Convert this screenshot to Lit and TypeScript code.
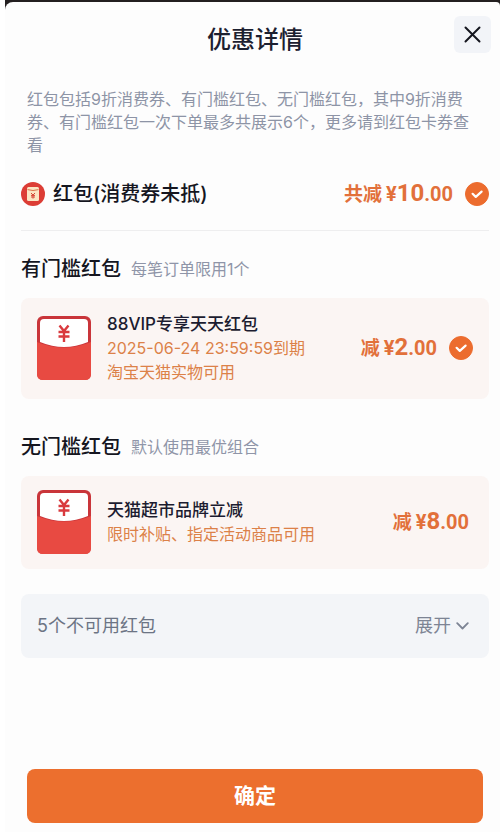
import { LitElement, html, css, nothing } from "lit";
import { customElement, property } from "lit/decorators.js";

const textFont = css`Inter, "Noto Sans CJK SC", sans-serif`;

@customElement("price-tag")
class PriceTag extends LitElement {
  @property() label = "减";
  @property() whole = "0";
  @property() cents = "00";
  @property({ type: Boolean }) selectable = false;

  static styles = css`
    :host { display: block; flex: none; color: #e2703a; font-family: ${textFont}; }
    .price { display: flex; align-items: center; gap: 12px; }
    .amount { font-size: 19px; line-height: 28px; font-weight: 700; white-space: nowrap; }
    .number { font-family: Roboto, sans-serif; font-weight: 700; font-size: 20px; margin-left: 4px; }
    .whole { font-size: 24px; }
    .box { display: grid; width: 24px; height: 24px; }
    .tick, .mark { grid-area: 1 / 1; width: 24px; height: 24px; margin: 0; }
    .tick { appearance: none; border: 1px solid #e2703a; border-radius: 50%; }
    .tick:checked { background: #ec6c2e; border-color: #ec6c2e; }
    .mark { pointer-events: none; }
  `;

  render() {
    return html`<label class="price">
      <span class="amount">${this.label}<span class="number">¥<span class="whole">${this.whole}</span>.${this.cents}</span></span>
      ${this.selectable
        ? html`<span class="box">
            <input class="tick" type="checkbox" checked />
            <svg class="mark" viewBox="0 0 24 24" aria-hidden="true">
              <path d="M7.6 11.8 L10.8 14.9 L16.6 9.6" fill="none" stroke="#fff" stroke-width="2.2" stroke-linecap="round" stroke-linejoin="round" />
            </svg>
          </span>`
        : nothing}
    </label>`;
  }
}

@customElement("coupon-card")
class CouponCard extends LitElement {
  @property() name = "";
  @property({ attribute: false }) notes: string[] = [];
  @property() whole = "0";
  @property({ type: Boolean }) selectable = false;

  static styles = css`
    :host { display: block; font-family: ${textFont}; }
    .card { display: flex; align-items: center; gap: 16px; padding: 14px 16px 15px; background: #fbf5f3; border-radius: 8px; }
    .card.plain { padding-right: 20px; }
    .envelope { flex: none; width: 54px; height: 64px; }
    .info { flex: 1; min-width: 0; }
    .name { margin: 0; font-size: 17px; line-height: 24px; font-weight: 500; color: #1c1c30; }
    .note { margin: 0; font-size: 16px; line-height: 24px; color: #dc8148; white-space: nowrap; }
  `;

  render() {
    return html`<article class="card ${this.selectable ? "" : "plain"}">
      <svg class="envelope" viewBox="0 0 54 64" aria-hidden="true">
        <rect width="54" height="64" rx="6" fill="#c9353a" />
        <path d="M0 26 Q27 37 54 26 V58 Q54 64 48 64 H6 Q0 64 0 58 Z" fill="#e84a42" />
        <path d="M3 7 Q3 3 7 3 H47 Q51 3 51 7 V26 Q27 36 3 26 Z" fill="#fff" />
        <path d="M22.5 9.5 L27 15 L31.5 9.5 M27 15 V26 M21.5 16 H32.5 M21.5 20.5 H32.5" fill="none" stroke="#d93a3e" stroke-width="2.4" />
      </svg>
      <div class="info">
        <h3 class="name">${this.name}</h3>
        ${this.notes.map((n) => html`<p class="note">${n}</p>`)}
      </div>
      <price-tag whole=${this.whole} ?selectable=${this.selectable}></price-tag>
    </article>`;
  }
}

@customElement("app-root")
class AppRoot extends LitElement {
  static styles = css`
    :host { display: block; background: #fff; font-family: ${textFont}; color: #15161f; }
    * { box-sizing: border-box; }
    .backdrop { margin-left: 5px; padding-top: 2px; background: #231f20; }
    .sheet { position: relative; display: flex; flex-direction: column; min-height: calc(100vh - 2px); padding: 20px 11px 9px 16px; background: #fdfdfd; border-radius: 8px 4px 0 0; }
    .title { margin: 0; text-align: center; font-size: 24px; line-height: 36px; font-weight: 500; color: #1c2030; }
    .close { position: absolute; top: 14px; right: 9px; display: grid; place-items: center; width: 37px; height: 37px; padding: 0; border: 0; border-radius: 6px; background: #f2f4f8; }
    .notice { margin: 30px 12px 0 6px; font-size: 16px; line-height: 23px; color: #8d94a6; }
    .total { display: flex; align-items: center; gap: 8px; margin-top: 6px; padding: 16px 0 21px; border-bottom: 1px solid #eeeeef; }
    .badge { flex: none; width: 24px; height: 24px; }
    .total-name { flex: 1; margin: 0; font-size: 20px; line-height: 28px; font-weight: 500; }
    .section-head { display: flex; align-items: center; gap: 10px; margin: 24px 0 15px; }
    .section-title { margin: 0; font-size: 20px; line-height: 28px; font-weight: 500; }
    .hint { font-size: 16px; line-height: 28px; color: #8f95a8; }
    .section + .section { margin-top: 10px; }
    .unavailable { display: flex; align-items: center; justify-content: space-between; width: 100%; margin: 25px 0 24px; padding: 18px 20px 18px 16px; border: 0; border-radius: 8px; background: #f3f5f8; font: 400 18px/28px ${textFont}; color: #6c7484; }
    .expand { display: flex; align-items: center; gap: 5px; color: #7d8494; }
    .confirm { margin: auto 6px 0; padding: 11px; border: 0; border-radius: 8px; background: #ec6f2e; color: #fff; font: 700 21px/32px ${textFont}; }
  `;

  render() {
    return html`<div class="backdrop"><main class="sheet">
      <h1 class="title">优惠详情</h1>
      <button class="close" type="button" aria-label="关闭">
        <svg width="17" height="17" viewBox="0 0 17 17"><path d="M1.5 1.5 L15.5 15.5 M15.5 1.5 L1.5 15.5" stroke="#15161f" stroke-width="2" stroke-linecap="round" /></svg>
      </button>
      <p class="notice">红包包括9折消费券、有门槛红包、无门槛红包，其中9折消费券、有门槛红包一次下单最多共展示6个，更多请到红包卡券查看</p>

      <div class="total">
        <svg class="badge" viewBox="0 0 24 24" aria-hidden="true">
          <circle cx="12" cy="12" r="12" fill="#dc3d35" />
          <rect x="6" y="5" width="12" height="14" rx="1.5" fill="#fbe6c4" />
          <path d="M6.5 7.6 Q12 9.4 17.5 7.6" fill="none" stroke="#d9734c" stroke-width="1" />
          <path d="M10 11 L12 13 L14 11 M12 13 V16.6 M10 13.4 H14 M10 15 H14" fill="none" stroke="#d5493a" stroke-width="1" />
        </svg>
        <h2 class="total-name">红包(消费券未抵)</h2>
        <price-tag label="共减" whole="10" selectable></price-tag>
      </div>

      <section class="section">
        <div class="section-head"><h2 class="section-title">有门槛红包</h2><span class="hint">每笔订单限用1个</span></div>
        <coupon-card name="88VIP专享天天红包" .notes=${["2025-06-24 23:59:59到期", "淘宝天猫实物可用"]} whole="2" selectable></coupon-card>
      </section>

      <section class="section">
        <div class="section-head"><h2 class="section-title">无门槛红包</h2><span class="hint">默认使用最优组合</span></div>
        <coupon-card name="天猫超市品牌立减" .notes=${["限时补贴、指定活动商品可用"]} whole="8"></coupon-card>
      </section>

      <button class="unavailable" type="button" aria-expanded="false">
        <span>5个不可用红包</span>
        <span class="expand">展开
          <svg width="13" height="8" viewBox="0 0 13 8" aria-hidden="true"><path d="M1.2 1.2 L6.5 6.5 L11.8 1.2" fill="none" stroke="#7d8494" stroke-width="1.8" stroke-linecap="round" stroke-linejoin="round" /></svg>
        </span>
      </button>

      <button class="confirm" type="button">确定</button>
    </main></div>`;
  }
}
